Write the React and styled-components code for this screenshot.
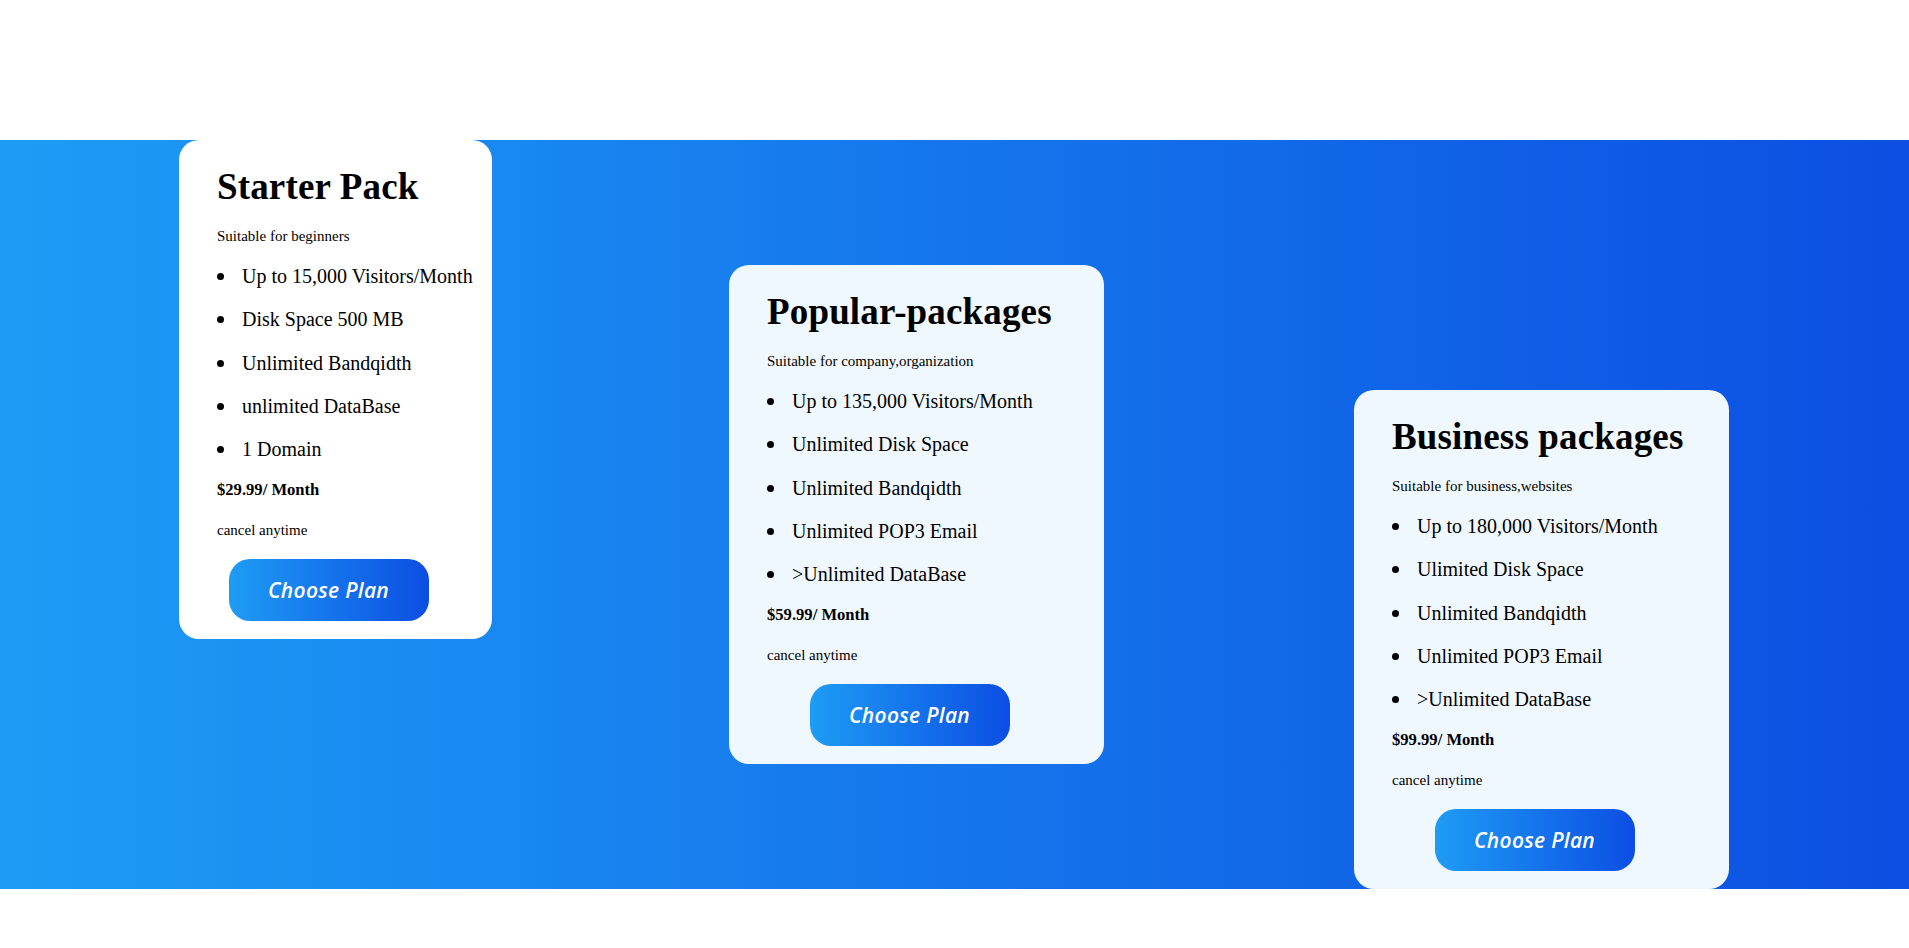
import React from 'react'
import styled, { createGlobalStyle } from 'styled-components'

const GlobalStyle = createGlobalStyle`
html {
  overflow-y: scroll;
}
body {
  margin: 0;
  background: #fff;
  font-family: "Liberation Serif", "Times New Roman", serif;
  color: #000;
}
::-webkit-scrollbar {
  width: 10px;
  background: #f0f0f0;
}
::-webkit-scrollbar-track {
  background: #f0f0f0;
}
`;

const Page = styled.div`
padding-top: 140px;
padding-bottom: 58px;
`;

const Section = styled.section`
display: flex;
align-items: flex-start;
padding-left: 179px;
background: linear-gradient(90deg, #1d9cf5 0%, #0c4fe2 100%);
`;

const Card = styled.div`
box-sizing: border-box;
display: flex;
flex-direction: column;
width: ${p => p.$width}px;
margin-top: ${p => p.$top}px;
margin-left: ${p => p.$left}px;
padding: 26px 38px 18px 38px;
border-radius: 20px;
background: ${p => p.$bg};
`;

const Title = styled.h2`
margin: 0;
font-size: 37px;
line-height: 42px;
font-weight: bold;
letter-spacing: 0.15px;
white-space: nowrap;
`;

const Subtitle = styled.p`
margin: 19px 0 0;
font-size: 15px;
line-height: 18px;
`;

const Features = styled.ul`
margin: 20px 0 0;
padding: 0;
list-style: none;
`;

const Feature = styled.li`
font-size: 20px;
line-height: 23px;
white-space: nowrap;
& + & {
  margin-top: 20.3px;
}
&::before {
  content: '';
  display: inline-block;
  width: 7px;
  height: 7px;
  border-radius: 50%;
  background: #000;
  vertical-align: 3px;
  margin-right: 18px;
}
`;

const Price = styled.p`
margin: 19px 0 0;
font-size: 16.6px;
line-height: 19px;
font-weight: bold;
`;

const Note = styled.p`
margin: 22px 0 0;
font-size: 15px;
line-height: 18px;
`;

const ChooseButton = styled.button`
align-self: center;
margin: 20px 14px 0 0;
width: 200px;
height: 62px;
border: none;
border-radius: 21px;
background: linear-gradient(90deg, #1e9cf5 0%, #0c4ee3 100%);
color: #fff;
font-family: "Open Sans", "Liberation Sans", sans-serif;
font-style: italic;
font-weight: 600;
font-size: 21px;
letter-spacing: 0.3px;
cursor: pointer;
`;

const plans = [
  {
    title: 'Starter Pack',
    subtitle: 'Suitable for beginners',
    features: ['Up to 15,000 Visitors/Month', 'Disk Space 500 MB', 'Unlimited Bandqidth', 'unlimited DataBase', '1 Domain'],
    price: '$29.99/ Month',
    width: 313, top: 0, left: 0, bg: '#ffffff',
  },
  {
    title: 'Popular-packages',
    subtitle: 'Suitable for company,organization',
    features: ['Up to 135,000 Visitors/Month', 'Unlimited Disk Space', 'Unlimited Bandqidth', 'Unlimited POP3 Email', '>Unlimited DataBase'],
    price: '$59.99/ Month',
    width: 375, top: 125, left: 237, bg: '#f0f8ff',
  },
  {
    title: 'Business packages',
    subtitle: 'Suitable for business,websites',
    features: ['Up to 180,000 Visitors/Month', 'Ulimited Disk Space', 'Unlimited Bandqidth', 'Unlimited POP3 Email', '>Unlimited DataBase'],
    price: '$99.99/ Month',
    width: 375, top: 250, left: 250, bg: '#f0f8ff',
  },
];

const PlanCard = ({ plan }) => (
  <Card $width={plan.width} $top={plan.top} $left={plan.left} $bg={plan.bg}>
    <Title>{plan.title}</Title>
    <Subtitle>{plan.subtitle}</Subtitle>
    <Features>
      {plan.features.map(f => <Feature key={f}>{f}</Feature>)}
    </Features>
    <Price>{plan.price}</Price>
    <Note>cancel anytime</Note>
    <ChooseButton>Choose Plan</ChooseButton>
  </Card>
);

const App = () => {
  return (
    <Page>
      <GlobalStyle />
      <Section>
        {plans.map(p => <PlanCard key={p.title} plan={p} />)}
      </Section>
    </Page>
  )
}

export default App;
